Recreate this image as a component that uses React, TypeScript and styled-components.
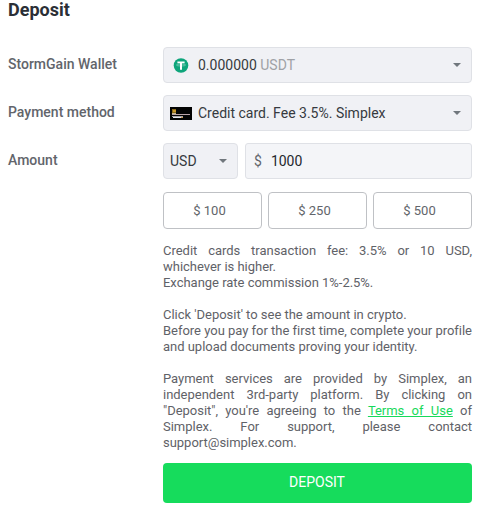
import React from "react";
import styled, { createGlobalStyle } from "styled-components";

const GlobalStyle = createGlobalStyle`
  * { box-sizing: border-box; }
  body { margin: 0; background: #fff; font-family: Roboto, sans-serif; color: #5f6268; }
`;

const Page = styled.main`
  width: 472px;
  padding-left: 8px;
`;

const Title = styled.h1`
  margin: 0;
  height: 47px;
  font-size: 18px;
  line-height: 20px;
  font-weight: 700;
  color: #2b2f36;
`;

const Row = styled.div<{ $gap: number }>`
  display: grid;
  grid-template-columns: 155px 309px;
  align-items: start;
  margin-bottom: ${(p) => p.$gap}px;
`;

const Label = styled.label`
  font-size: 14px;
  line-height: 34px;
  font-weight: 500;
  color: #62656b;
`;

const Select = styled.div<{ $width?: number }>`
  display: flex;
  align-items: center;
  width: ${(p) => (p.$width ? `${p.$width}px` : "100%")};
  height: 36px;
  padding: 0 10px 0 6px;
  border: 1px solid #dfe1e6;
  border-radius: 4px;
  background: #f0f1f5;
  font-size: 14px;
  line-height: 36px;
  color: #363a40;
  white-space: pre;
`;

const IconSlot = styled.span`
  display: flex;
  justify-content: center;
  width: 22px;
  margin-right: 6px;
`;

const Caret = styled.span`
  margin-left: auto;
  border: 4px solid transparent;
  border-top-color: #70777d;
  border-bottom: 0;
`;

const Muted = styled.span`
  color: #9fa1a6;
`;

const AmountFields = styled.div`
  display: flex;
  gap: 7px;
`;

const AmountInput = styled.div`
  display: flex;
  flex: 1;
  height: 36px;
  padding-left: 8px;
  gap: 9px;
  border: 1px solid #dfe1e6;
  border-radius: 3px;
  background: #f4f5f8;
  font-size: 14px;
  line-height: 35px;
  color: #25282d;
`;

const Currency = styled.span`
  color: #62656b;
`;

const Body = styled.section`
  margin-left: 155px;
`;

const Presets = styled.div`
  display: grid;
  grid-template-columns: repeat(3, 1fr);
  gap: 6px;
`;

const Preset = styled.button`
  height: 37px;
  padding: 0 6px 0 0;
  border: 1px solid #bfc1c5;
  border-radius: 4px;
  background: #fff;
  font: 400 13px/35px Roboto, sans-serif;
  color: #62656b;
`;

const Notes = styled.div`
  margin: 14px 0 12px;
  font-size: 13px;
  line-height: 16px;
  letter-spacing: -0.02px;
  text-align: justify;
  color: #5f6268;
`;

const Note = styled.p`
  margin: 0 0 16px;
  &:last-child { margin-bottom: 0; }
`;

const Terms = styled.a`
  color: #17d95b;
  text-decoration: underline;
`;

const Submit = styled.button`
  display: block;
  width: 100%;
  height: 40px;
  padding: 0 1px 1px 0;
  border: 0;
  border-radius: 4px;
  background: #16dc5c;
  font: 400 14px/39px Roboto, sans-serif;
  color: #fff;
`;

const TetherIcon = () => (
  <svg width="16" height="15" viewBox="0 0 16 15">
    <circle cx="8" cy="7.5" r="7.3" fill="#0ea57b" />
    <path d="M4.4 3.4h7.2v1.9H9v6.4H7V5.3H4.4z" fill="#fff" />
    <ellipse cx="8" cy="7" rx="4.5" ry="1" fill="none" stroke="#fff" strokeWidth=".6" opacity=".6" />
  </svg>
);

const CardIcon = () => (
  <svg width="22" height="13" viewBox="0 0 22 13" shapeRendering="crispEdges">
    <path d="M0 0h22v13H0z" fill="#030303" />
    <path d="M2 2h4v4H2z" fill="#8a6a1a" />
    <path d="M3 3h3v2H3z" fill="#c8962c" />
    <path d="M2 6h4v1H2z" fill="#c9b68c" />
    <path d="M2 7h18v1H2z" fill="#b9a3a8" />
    <path d="M2 9h11v1H2z" fill="#a8a4ac" />
    <path d="M3 10h8v1H3z" fill="#e4e4ea" />
    <path d="M11 10h2v1h-2z" fill="#c99a50" />
  </svg>
);

export default function App() {
  return (
    <>
      <GlobalStyle />
      <Page>
        <Title>Deposit</Title>
        <Row $gap={12}>
          <Label>StormGain Wallet</Label>
          <Select>
            <IconSlot><TetherIcon /></IconSlot>
            0.000000 <Muted>USDT</Muted>
            <Caret />
          </Select>
        </Row>
        <Row $gap={12}>
          <Label>Payment method</Label>
          <Select>
            <IconSlot><CardIcon /></IconSlot>
            Credit card. Fee 3.5%. Simplex
            <Caret />
          </Select>
        </Row>
        <Row $gap={13}>
          <Label>Amount</Label>
          <AmountFields>
            <Select $width={75}>USD<Caret /></Select>
            <AmountInput><Currency>$</Currency>1000</AmountInput>
          </AmountFields>
        </Row>
        <Body>
          <Presets>
            {[100, 250, 500].map((value) => (
              <Preset key={value}>$ {value}</Preset>
            ))}
          </Presets>
          <Notes>
            <Note>
              Credit cards transaction fee: 3.5% or 10 USD, whichever is higher.
              <br />
              Exchange rate commission 1%-2.5%.
            </Note>
            <Note>
              Click 'Deposit' to see the amount in crypto.
              <br />
              Before you pay for the first time, complete your profile and upload documents proving your identity.
            </Note>
            <Note>
              Payment services are provided by Simplex, an independent 3rd-party platform. By clicking on "Deposit",
              you're agreeing to the <Terms>Terms of Use</Terms> of Simplex. For support, please contact
              support@simplex.com.
            </Note>
          </Notes>
          <Submit>DEPOSIT</Submit>
        </Body>
      </Page>
    </>
  );
}
